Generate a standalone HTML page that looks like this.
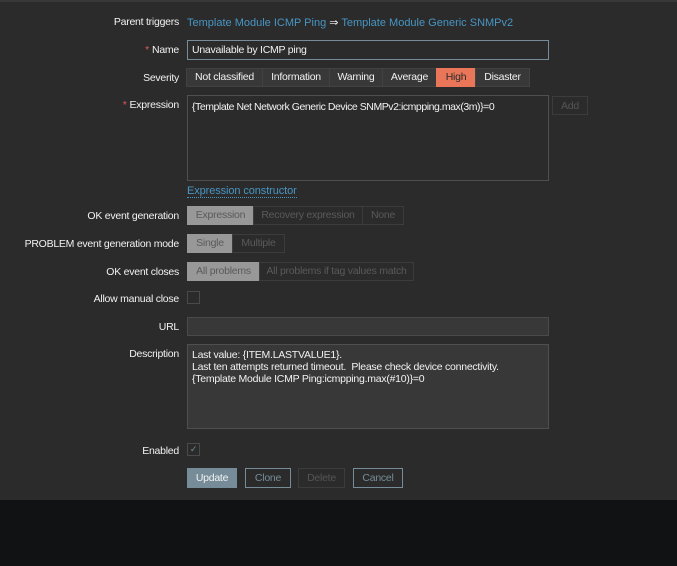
<!DOCTYPE html>
<html><head><style>
*{box-sizing:border-box;margin:0;padding:0}
body{width:677px;height:566px;background:#111214;font-family:"Liberation Sans",Arial,sans-serif;font-size:10.5px;letter-spacing:-0.25px;color:#f2f2f2;position:relative;overflow:hidden}
#p{position:absolute;left:0;top:0;width:677px;height:500px;background:#2b2b2b;border-top:2px solid #383838}
.a{position:absolute;white-space:nowrap}
.l{position:absolute;right:498px;text-align:right;white-space:nowrap}
.r{color:#e45959;margin-right:3px}
.in{position:absolute;background:#2b2b2b;border:1px solid #4f4f4f;white-space:nowrap}
.seg{position:absolute;display:flex;height:19px;white-space:nowrap}
.seg div{border:1px solid #424242;margin-left:-1px;text-align:center;line-height:17px;background:#383838;color:#f2f2f2;overflow:hidden}
.seg.d div{background:#2b2b2b;color:#5a5a5a;border-color:#3c3c3c}
.seg.d div.on{background:#989898;color:#5a5a5a;border-color:#989898}
.btn{position:absolute;height:20px;line-height:18px;text-align:center;border:1px solid #768d99;color:#768d99}
a{color:#4796c4;text-decoration:none}
</style></head><body>
<div id="p"></div>
<div class="l" style="top:16px">Parent triggers</div>
<div class="a" style="left:187px;top:16px;font-size:11px;letter-spacing:0"><a>Template Module ICMP Ping</a> ⇒ <a>Template Module Generic SNMPv2</a></div>
<div class="l" style="top:44px"><span class="r">*</span>Name</div>
<div class="in" style="left:187px;top:40px;width:362px;height:20px;border-color:#768d99;padding:3px 4px">Unavailable by ICMP ping</div>
<div class="l" style="top:72px">Severity</div>
<div class="seg" style="left:187px;top:68px">
<div style="width:77px">Not classified</div><div style="width:68px">Information</div><div style="width:54px">Warning</div><div style="width:55px">Average</div><div style="width:40px;background:#e97659;color:#2b2b2b;border-color:#e97659">High</div><div style="width:55px">Disaster</div></div>
<div class="l" style="top:99px"><span class="r">*</span>Expression</div>
<div class="in" style="left:187px;top:95px;width:362px;height:86px;padding:5px 4px;letter-spacing:-0.45px">{Template Net Network Generic Device SNMPv2:icmpping.max(3m)}=0</div>
<div class="btn" style="left:552px;top:96px;width:36px;height:19px;border-color:#3c3c3c;color:#555">Add</div>
<div class="a" style="left:187px;top:185px;border-bottom:1px dotted #4796c4;line-height:12px;font-size:11px;letter-spacing:-0.1px"><a>Expression constructor</a></div>
<div class="l" style="top:210px">OK event generation</div>
<div class="seg d" style="left:188px;top:206px"><div class="on" style="width:67px">Expression</div><div style="width:110px">Recovery expression</div><div style="width:42px">None</div></div>
<div class="l" style="top:238px">PROBLEM event generation mode</div>
<div class="seg d" style="left:188px;top:234px"><div class="on" style="width:46px">Single</div><div style="width:53px">Multiple</div></div>
<div class="l" style="top:266px">OK event closes</div>
<div class="seg d" style="left:188px;top:262px"><div class="on" style="width:73px">All problems</div><div style="width:155px">All problems if tag values match</div></div>
<div class="l" style="top:293px">Allow manual close</div>
<div class="in" style="left:187px;top:291px;width:13px;height:13px;border-color:#4a4a4a"></div>
<div class="l" style="top:321px">URL</div>
<div class="in" style="left:187px;top:317px;width:362px;height:19px;background:#383838;border-color:#4a4a4a"></div>
<div class="l" style="top:348px">Description</div>
<div class="in" style="left:187px;top:344px;width:362px;height:85px;background:#383838;border-color:#4f4f4f;padding:4px 4px;line-height:12px">Last value: {ITEM.LASTVALUE1}.<br>Last ten attempts returned timeout.&nbsp; Please check device connectivity.<br>{Template Module ICMP Ping:icmpping.max(#10)}=0</div>
<div class="l" style="top:445px">Enabled</div>
<div class="in" style="left:187px;top:443px;width:13px;height:13px;border-color:#4a4a4a;color:#768d99;font-size:9px;line-height:11px;text-align:center">✓</div>
<div class="btn" style="left:187px;top:468px;width:50px;background:#768d99;color:#f2f2f2">Update</div>
<div class="btn" style="left:245px;top:468px;width:46px">Clone</div>
<div class="btn" style="left:298px;top:468px;width:47px;border-color:#3c3c3c;color:#555">Delete</div>
<div class="btn" style="left:353px;top:468px;width:50px">Cancel</div>
</body></html>
